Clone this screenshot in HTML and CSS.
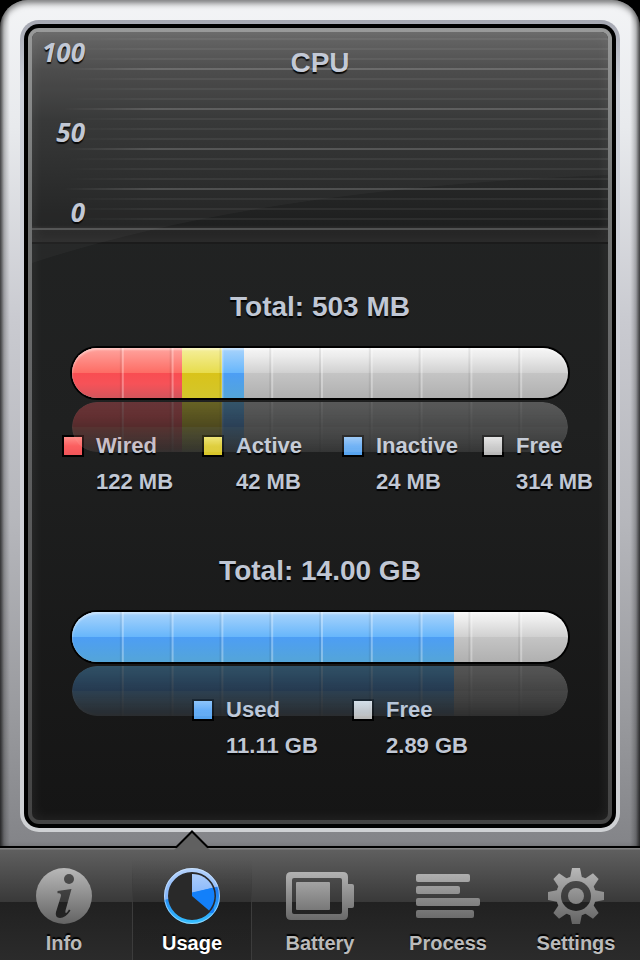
FILE: index.html
```html
<!DOCTYPE html>
<html lang="en">
<head>
<meta charset="utf-8">
<meta name="viewport" content="width=device-width, initial-scale=1">
<title>Usage</title>
<link rel="stylesheet" href="styles.css">
</head>
<body>
<main class="frame">
  <div class="rim"><div class="gap"><div class="bevel"><div class="screen">
    <section class="chart">
      <div class="lines"></div>
      <ul class="axis"><li>100</li><li>50</li><li>0</li></ul>
      <h2 class="title">CPU</h2>
    </section>

    <section class="meter">
      <h2 class="title">Total: 503 MB</h2>
      <div class="bar">
        <span class="red" style="width:22.2%"></span><span class="yellow" style="width:8.1%"></span><span class="blue" style="width:4.4%"></span>
      </div>
      <div class="bar mirror">
        <span class="red" style="width:22.2%"></span><span class="yellow" style="width:8.1%"></span><span class="blue" style="width:4.4%"></span>
      </div>
      <dl class="legend four">
        <div><i class="swatch red"></i><dt>Wired</dt><dd>122 MB</dd></div>
        <div><i class="swatch yellow"></i><dt>Active</dt><dd>42 MB</dd></div>
        <div><i class="swatch blue"></i><dt>Inactive</dt><dd>24 MB</dd></div>
        <div><i class="swatch free"></i><dt>Free</dt><dd>314 MB</dd></div>
      </dl>
    </section>

    <section class="meter">
      <h2 class="title">Total: 14.00 GB</h2>
      <div class="bar"><span class="blue" style="width:77%"></span></div>
      <div class="bar mirror"><span class="blue" style="width:77%"></span></div>
      <dl class="legend two">
        <div><i class="swatch blue"></i><dt>Used</dt><dd>11.11 GB</dd></div>
        <div><i class="swatch free"></i><dt>Free</dt><dd>2.89 GB</dd></div>
      </dl>
    </section>

    <svg class="glare" viewBox="0 0 576 788" preserveAspectRatio="none" aria-hidden="true">
      <path d="M0 0H576V143Q224 157 0 231Z"/>
    </svg>
  </div></div></div></div>
</main>

<nav class="tabs">
  <a href="#info">
    <svg class="icon" viewBox="0 0 56 56" aria-hidden="true">
      <defs>
        <linearGradient id="steel" gradientUnits="userSpaceOnUse" x1="0" y1="0" x2="0" y2="56">
          <stop offset="0" stop-color="#b8b8b8"/><stop offset="1" stop-color="#636363"/>
        </linearGradient>
        <mask id="infoMask">
          <circle cx="28" cy="28" r="28" fill="#fff"/>
          <circle cx="33" cy="11" r="5"/>
          <path d="M21.500 23L35.500 21L29.500 42.500Q28.700 46 31 44.500L33 41.500L34.500 42.500Q29.500 50 24 50Q18.500 49.500 20 44L24.800 28.500Q25.600 25.500 23 25.300L21.500 25.300Z"/>
        </mask>
      </defs>
      <rect width="56" height="56" fill="url(#steel)" mask="url(#infoMask)"/>
    </svg>
    <span>Info</span>
  </a>
  <a href="#usage" class="current" aria-current="page">
    <svg class="pointer" viewBox="0 0 36 20" aria-hidden="true">
      <path d="M0 20L2 18L18 1.500L34 18L36 20Z" fill="#606060"/>
      <path d="M0 17H2.500L18 1.500L33.500 17H36" fill="none" stroke="#000" stroke-width="2"/>
    </svg>
    <svg class="icon" viewBox="0 0 56 56" aria-hidden="true">
      <defs>
        <linearGradient id="ringLow" x1="0" y1="0" x2="0" y2="1">
          <stop offset=".4" stop-color="#1f7df2"/><stop offset="1" stop-color="#35c0ff"/>
        </linearGradient>
        <linearGradient id="ringHigh" x1="0" y1="0" x2="0" y2="1">
          <stop offset="0" stop-color="#b5d2fb"/><stop offset="1" stop-color="#7fb2fa"/>
        </linearGradient>
        <mask id="dial">
          <circle cx="28" cy="28" r="26" fill="none" stroke="#fff" stroke-width="4"/>
          <path d="M28 28V6A22 22 0 0 1 45 42.500Z" fill="#fff"/>
        </mask>
      </defs>
      <circle cx="28" cy="28" r="26" fill="#292929"/>
      <g mask="url(#dial)">
        <rect width="56" height="56" fill="url(#ringLow)"/>
        <path d="M0 0H56V18L0 32Z" fill="url(#ringHigh)"/>
        <path d="M28 28V24.500L50 19.500V45H45Z" fill="#1380fa"/>
      </g>
      <circle cx="28" cy="28" r="27.500" fill="none" stroke="#d7ecff" stroke-opacity=".6"/>
    </svg>
    <span>Usage</span>
  </a>
  <a href="#battery">
    <svg class="icon wide" viewBox="0 0 68 56" aria-hidden="true">
      <g fill="url(#steel)">
        <path fill-rule="evenodd" d="M6 4H57Q62 4 62 9V16H66Q68 16 68 18V38Q68 40 66 40H62V47Q62 52 57 52H5Q0 52 0 47V9Q0 4 5 4ZM8 10Q6 10 6 12V44Q6 46 8 46H54Q56 46 56 44V12Q56 10 54 10Z"/>
        <rect x="10" y="14" width="34" height="28" rx="1"/>
      </g>
    </svg>
    <span>Battery</span>
  </a>
  <a href="#process">
    <svg class="icon wide" viewBox="0 0 68 56" aria-hidden="true">
      <g fill="url(#steel)">
        <rect x="2" y="6" width="54" height="8" rx="2"/><rect x="2" y="18" width="44" height="8" rx="2"/>
        <rect x="2" y="30" width="64" height="8" rx="2"/><rect x="2" y="42" width="58" height="8" rx="2"/>
      </g>
    </svg>
    <span>Process</span>
  </a>
  <a href="#settings">
    <svg class="icon" viewBox="0 0 56 56" aria-hidden="true">
      <defs>
        <path id="tooth" d="M22 10L24 0H32L34 10Z"/>
        <mask id="gear">
          <g fill="#fff">
            <circle cx="28" cy="28" r="20"/>
            <use href="#tooth"/><use href="#tooth" transform="rotate(45 28 28)"/>
            <use href="#tooth" transform="rotate(90 28 28)"/><use href="#tooth" transform="rotate(135 28 28)"/>
            <use href="#tooth" transform="rotate(180 28 28)"/><use href="#tooth" transform="rotate(225 28 28)"/>
            <use href="#tooth" transform="rotate(270 28 28)"/><use href="#tooth" transform="rotate(315 28 28)"/>
          </g>
          <circle cx="28" cy="28" r="15"/>
          <circle cx="28" cy="28" r="8" fill="#fff"/>
        </mask>
      </defs>
      <rect width="56" height="56" fill="url(#steel)" mask="url(#gear)"/>
    </svg>
    <span>Settings</span>
  </a>
</nav>
</body>
</html>
```
FILE: styles.css
```css
* { box-sizing: border-box; margin: 0; padding: 0; }

body {
  min-height: 100vh;
  display: flex;
  flex-direction: column;
  background: #000;
  color: #c0c7d4;
  font-family: "Liberation Sans", Arial, sans-serif;
  font-weight: bold;
}

/* Brushed metal surround */
.frame {
  flex: 1;
  display: flex;
  padding: 20px 20px 14px;
  border-radius: 28px 28px 0 0;
  background:
    linear-gradient(to right, rgba(0,0,0,.6), rgba(0,0,0,.2) 4px, rgba(0,0,0,0) 10px, rgba(0,0,0,0) calc(100% - 10px), rgba(0,0,0,.2) calc(100% - 4px), rgba(0,0,0,.6)),
    linear-gradient(#f3f4f6 0%, #e8eaed 15%, #c9cad0 38%, #b5b6bb 62%, #98999d 85%, #838488 100%);
  box-shadow: inset 0 3px 6px rgba(0,0,0,.55);
}

.rim, .gap, .bevel { flex: 1; display: flex; padding: 4px; }
.rim { border-radius: 19px; background: linear-gradient(#a6a8b2, #cdd1da 8%, #d0d1d8 60%, #cfd1d4); }
.gap { border-radius: 15px; background: #000; }
.bevel { border-radius: 11px; background: linear-gradient(#999a9a, #737575 20%, #606162 50%, #434343); }

.screen {
  position: relative;
  flex: 1;
  min-width: 0;
  border-radius: 7px;
  overflow: hidden;
  background: linear-gradient(#232525, #1f2020 50%, #151515);
  box-shadow: inset 0 0 14px rgba(255,255,255,.08);
}

.glare { position: absolute; inset: 0; width: 100%; height: 100%; fill: #fff; fill-opacity: .03; pointer-events: none; }

.title { font-size: 28px; line-height: 36px; text-align: center; text-shadow: 0 2px 1px #000; }

/* CPU history */
.chart {
  display: grid;
  height: 212px;
  background: linear-gradient(#636363, #484848 18%, #323333 42%, #272828 70%, #1e1f1f 92%, #272727 93%, #232323);
  border-bottom: 2px solid #1b1b1b;
  box-shadow: inset 0 0 14px rgba(255,255,255,.08);
}
.chart > * { grid-area: 1 / 1; }
.lines {
  height: 198px;
  border-bottom: 2px solid #505151;
  background:
    repeating-linear-gradient(rgba(255,255,255,0) 0 36px, rgba(255,255,255,.12) 36px 38px, rgba(255,255,255,0) 38px 40px),
    repeating-linear-gradient(rgba(255,255,255,0) 0 6px, rgba(255,255,255,.06) 6px 8px, rgba(255,255,255,0) 8px 10px);
  -webkit-mask: linear-gradient(to right, transparent 30px, #000 120px) top / 100% 196px no-repeat, linear-gradient(#000, #000) bottom / 100% 2px no-repeat;
  mask: linear-gradient(to right, transparent 30px, #000 120px) top / 100% 196px no-repeat, linear-gradient(#000, #000) bottom / 100% 2px no-repeat;
}
.chart .title { padding-top: 13px; }
.axis {
  display: flex;
  flex-direction: column;
  gap: 40px;
  width: 53px;
  list-style: none;
  text-align: right;
  font: italic 700 26px/40px "Open Sans", "Noto Sans", sans-serif;
  text-shadow: 0 2px 1px #000;
}

/* Capacity meters */
.meter { padding: 45px 0 14px; }
.bar {
  position: relative;
  display: flex;
  height: 50px;
  margin: 23px 40px 0;
  border-radius: 25px;
  overflow: hidden;
  box-shadow: 0 0 0 2px #000;
}
.bar::after {
  content: "";
  position: absolute;
  inset: 0 -4px 0 2px;
  background: linear-gradient(to right, transparent calc(100% - 4px), rgba(0,0,0,.07) calc(100% - 4px) calc(100% - 2px), rgba(255,255,255,.3) calc(100% - 2px)) 0 0 / 10% 100%;
}
.bar::before {
  content: "";
  position: absolute;
  inset: 0;
  border-radius: 25px;
  box-shadow: inset 0 2px 2px rgba(255,255,255,.4);
}
.bar, .free { background: linear-gradient(#f6f6f6, #ececec 16%, #d0d0d0 50%, #c4c4c4 51%, #b0b0b0); }
.red { background: linear-gradient(#ffa49e, #fd6c64 50%, #f94d52 51%, #f65258 72%, #d2555c); }
.yellow { background: linear-gradient(#f5ef9c, #e7dc4c 50%, #d9c31a 51%, #d3c62c); }
.blue { background: linear-gradient(#a9d4fc, #67b6fb 50%, #4d9ef4 51%, #54a5d8); }
.mirror {
  z-index: 1;
  margin-top: 4px;
  box-shadow: none;
  transform: scaleY(-1);
  -webkit-mask: linear-gradient(to top, rgba(0,0,0,.4), rgba(0,0,0,.1));
  mask: linear-gradient(to top, rgba(0,0,0,.4), rgba(0,0,0,.1));
}

.legend { display: grid; margin-top: -18px; font-size: 22px; line-height: 24px; text-shadow: 0 2px 1px #000; }
.legend div { display: grid; grid-template-columns: 22px auto; justify-content: start; gap: 12px; white-space: nowrap; }
.legend dd { grid-column: 2; }
.four { grid-template-columns: repeat(3, 1fr) auto; padding: 0 15px 0 30px; }
.two { grid-template-columns: 160px auto; justify-content: center; padding-left: 20px; }
.swatch { align-self: center; height: 22px; border: 2px solid #000; background-origin: content-box; }
.swatch.red { background-image: linear-gradient(#ff8f8a, #fb5f60 50%, #f15559); }
.swatch.yellow { background-image: linear-gradient(#efe67a, #ddcb34 50%, #d8c628); }
.swatch.blue { background-image: linear-gradient(#8fc5fc, #5eaaf7 50%, #56a3ee); }
.swatch.free { background-image: linear-gradient(#e6e6e6, #c9c9c9 50%, #b6b6b6); }

/* Tab bar */
.tabs {
  display: grid;
  grid-template-columns: repeat(5, 1fr);
  height: 114px;
  border-top: 2px solid #000;
  background: linear-gradient(#818181 1px, #5f5f5f 2px, #393939 54px, #212121 54px, #2b2b2b);
}
.tabs a {
  position: relative;
  display: flex;
  flex-direction: column;
  align-items: center;
  gap: 7px;
  padding-top: 20px;
  color: #bababa;
  font-size: 20px;
  line-height: 24px;
  text-decoration: none;
  text-shadow: 0 -2px 1px #000;
}
.tabs .current {
  margin: 0 4px;
  color: #fff;
  background:
    linear-gradient(transparent 20px, #3c3c3c 60px) left / 1px 100% no-repeat,
    linear-gradient(transparent 20px, #3c3c3c 60px) right / 1px 100% no-repeat,
    linear-gradient(transparent 10px, rgba(0,0,0,.12) 50px);
}
.icon { width: 56px; height: 56px; flex: none; }
.icon.wide { width: 68px; }
.pointer { position: absolute; top: -18px; left: 50%; width: 36px; height: 20px; margin-left: -18px; }
```
